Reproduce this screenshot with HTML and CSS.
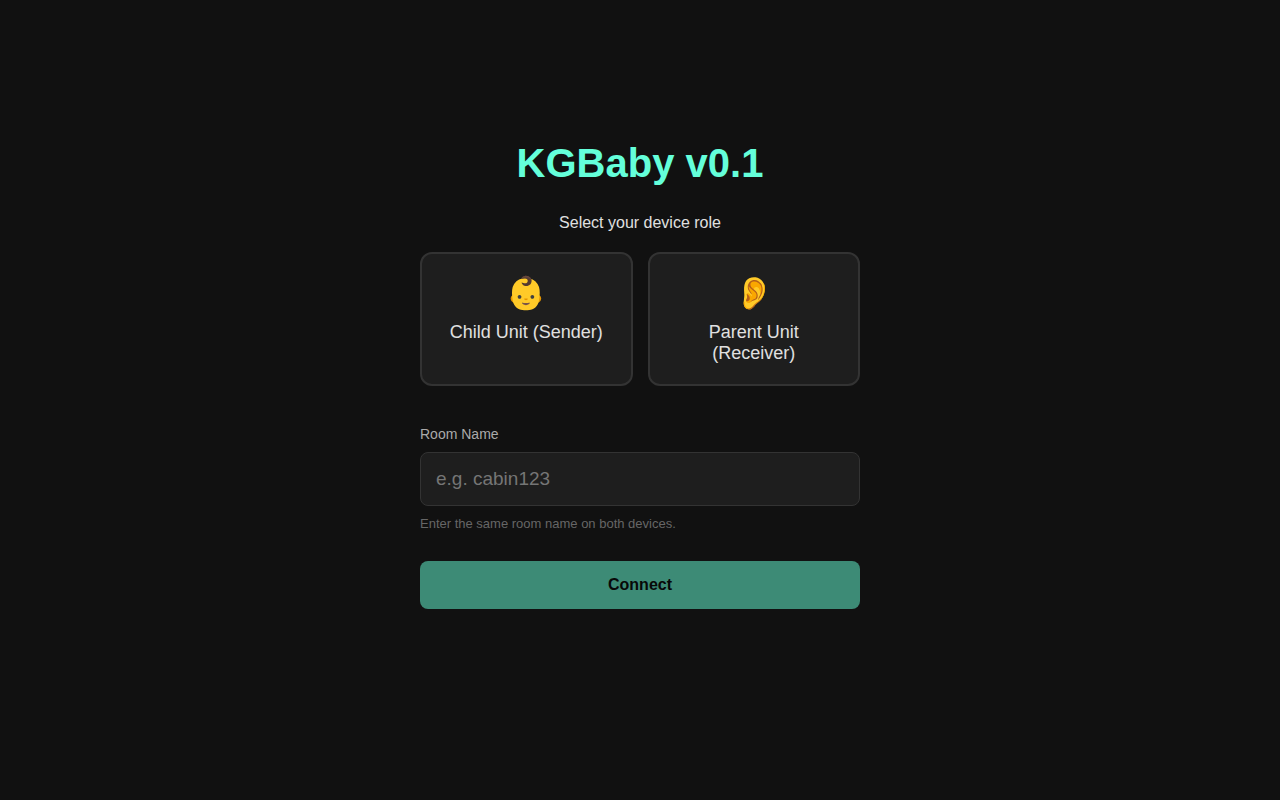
FILE: index.html
```html
<!DOCTYPE html>
<html lang="en">
<head>
<meta charset="utf-8">
<meta name="viewport" content="width=device-width, initial-scale=1">
<title>KGBaby v0.1</title>
<link rel="stylesheet" href="styles.css">
</head>
<body>
<main class="setup">
  <h1 class="title">KGBaby v0.1</h1>
  <p class="prompt">Select your device role</p>
  <div class="roles">
    <button class="role" type="button"><span class="role-icon">👶</span><span>Child Unit (Sender)</span></button>
    <button class="role" type="button"><span class="role-icon">👂</span><span>Parent Unit (Receiver)</span></button>
  </div>
  <form class="room">
    <label class="room-label" for="room">Room Name</label>
    <input class="room-input" id="room" type="text" placeholder="e.g. cabin123">
    <p class="hint">Enter the same room name on both devices.</p>
    <button class="connect" type="submit" disabled>Connect</button>
  </form>
</main>
</body>
</html>
```
FILE: styles.css
```css
* {
  box-sizing: border-box;
}

body {
  margin: 0;
  min-height: 100vh;
  display: flex;
  justify-content: center;
  background: #111;
  color: #e0e0e0;
  font-family: "Liberation Sans", Arial, sans-serif;
  font-size: 16px;
}

.setup {
  width: 100%;
  max-width: 480px;
  padding: 140px 20px 20px;
}

.title {
  margin: 0 0 28px;
  color: #64ffda;
  font-size: 40px;
  line-height: 46px;
  text-align: center;
}

.prompt {
  margin: 0 0 20px;
  line-height: 18px;
  text-align: center;
}

.roles {
  display: grid;
  grid-template-columns: 1fr 1fr;
  gap: 15px;
  margin-bottom: 40px;
}

.role {
  display: flex;
  flex-direction: column;
  align-items: center;
  gap: 10px;
  padding: 20px;
  border: 2px solid #333;
  border-radius: 12px;
  background: #1e1e1e;
  color: #e0e0e0;
  font: inherit;
  font-size: 18px;
  line-height: 21px;
}

.role-icon {
  font-size: 32px;
  line-height: 38px;
}

.room {
  display: flex;
  flex-direction: column;
}

.room-label {
  margin-bottom: 10px;
  color: #aaa;
  font-size: 14px;
  line-height: 16px;
}

.room-input {
  padding: 15px;
  border: 1px solid #333;
  border-radius: 8px;
  background: #1e1e1e;
  color: #fff;
  font: inherit;
  font-size: 19px;
  line-height: 22px;
}

.room-input::placeholder {
  color: #757575;
}

.hint {
  margin: 10px 0 30px;
  color: #666;
  font-size: 13px;
  line-height: 15px;
}

.connect {
  padding: 15px;
  border: 0;
  border-radius: 8px;
  background: #3d8b76;
  color: #080808;
  font: inherit;
  font-weight: bold;
  line-height: 18px;
}
```
